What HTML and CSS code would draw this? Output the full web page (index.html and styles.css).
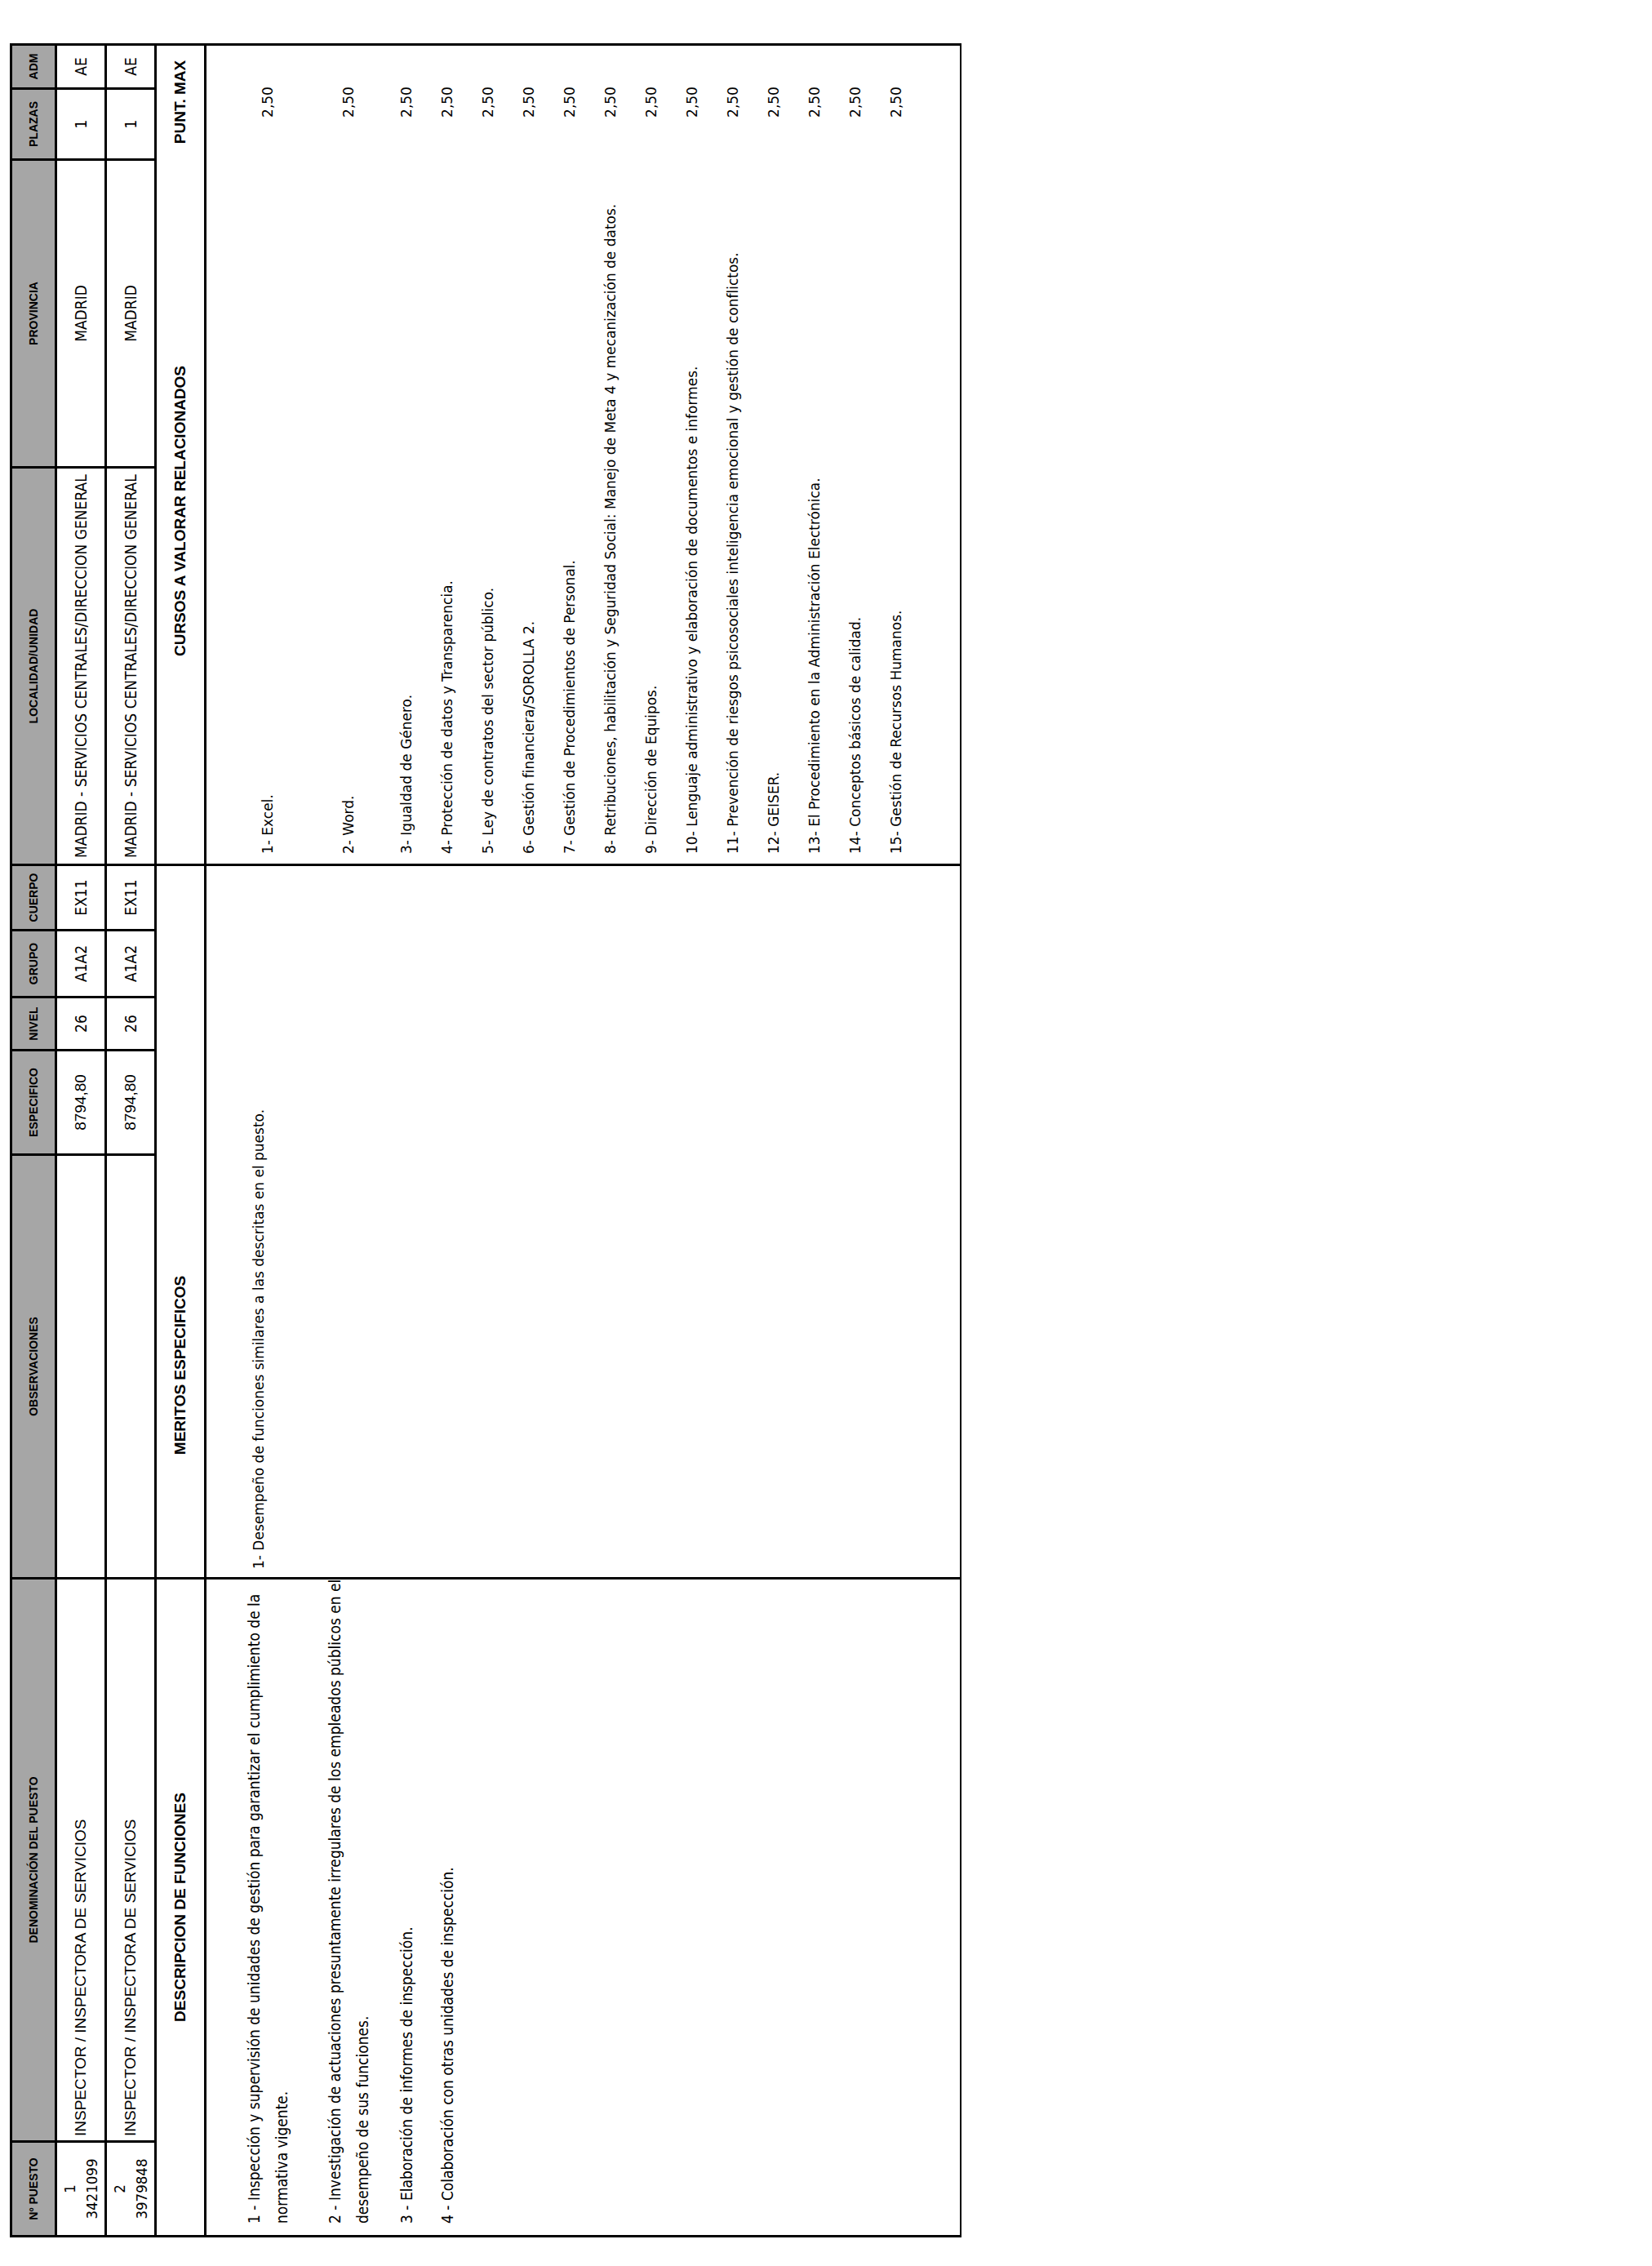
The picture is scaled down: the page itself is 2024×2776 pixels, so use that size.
FILE: index.html
```html
<!DOCTYPE html>
<html lang="es">
<head>
<meta charset="utf-8">
<title>Relación de puestos</title>
<link rel="stylesheet" href="styles.css">
</head>
<body>
<div class="page">
  <div class="sheet">
    <div class="hd">Nº PUESTO</div>
    <div class="hd">DENOMINACIÓN DEL PUESTO</div>
    <div class="hd">OBSERVACIONES</div>
    <div class="hd">ESPECIFICO</div>
    <div class="hd">NIVEL</div>
    <div class="hd">GRUPO</div>
    <div class="hd">CUERPO</div>
    <div class="hd">LOCALIDAD/UNIDAD</div>
    <div class="hd">PROVINCIA</div>
    <div class="hd">PLAZAS</div>
    <div class="hd">ADM</div>

    <div class="cell num nar"><span>1</span><span>3421099</span></div>
    <div class="cell left arial pad5">INSPECTOR / INSPECTORA DE SERVICIOS</div>
    <div class="cell"></div>
    <div class="cell arial">8794,80</div>
    <div class="cell nar">26</div>
    <div class="cell nar">A1A2</div>
    <div class="cell nar">EX11</div>
    <div class="cell left nar pad7">MADRID - SERVICIOS CENTRALES/DIRECCION GENERAL</div>
    <div class="cell nar">MADRID</div>
    <div class="cell nar">1</div>
    <div class="cell nar">AE</div>

    <div class="cell num nar"><span>2</span><span>3979848</span></div>
    <div class="cell left arial pad5">INSPECTOR / INSPECTORA DE SERVICIOS</div>
    <div class="cell"></div>
    <div class="cell arial">8794,80</div>
    <div class="cell nar">26</div>
    <div class="cell nar">A1A2</div>
    <div class="cell nar">EX11</div>
    <div class="cell left nar pad7">MADRID - SERVICIOS CENTRALES/DIRECCION GENERAL</div>
    <div class="cell nar">MADRID</div>
    <div class="cell nar">1</div>
    <div class="cell nar">AE</div>

    <div class="sec span2">DESCRIPCION DE FUNCIONES</div>
    <div class="sec open">MERITOS ESPECIFICOS</div>
    <div class="sec span4"></div>
    <div class="sec span2 open">CURSOS A VALORAR RELACIONADOS</div>
    <div class="sec span2">PUNT. MAX</div>

    <div class="body span2 funcs">
      <div class="row r1"><p>1 - Inspección y supervisión de unidades de gestión para garantizar el cumplimiento de la<br>normativa vigente.</p></div>
      <div class="row r2"><p>2 - Investigación de actuaciones presuntamente irregulares de los empleados públicos en el<br>desempeño de sus funciones.</p></div>
      <div class="row"><p>3 - Elaboración de informes de inspección.</p></div>
      <div class="row"><p>4 - Colaboración con otras unidades de inspección.</p></div>
    </div>
    <div class="body span5 meritos">
      <div class="row rm">1- Desempeño de funciones similares a las descritas en el puesto.</div>
    </div>
    <div class="body span4 cursos">
      <div class="row r1"><span class="cn">1- Excel.</span><span class="pt">2,50</span></div>
      <div class="row r2"><span class="cn">2- Word.</span><span class="pt">2,50</span></div>
      <div class="row"><span class="cn">3- Igualdad de Género.</span><span class="pt">2,50</span></div>
      <div class="row"><span class="cn">4- Protección de datos y Transparencia.</span><span class="pt">2,50</span></div>
      <div class="row"><span class="cn">5- Ley de contratos del sector público.</span><span class="pt">2,50</span></div>
      <div class="row"><span class="cn">6- Gestión financiera/SOROLLA 2.</span><span class="pt">2,50</span></div>
      <div class="row"><span class="cn">7- Gestión de Procedimientos de Personal.</span><span class="pt">2,50</span></div>
      <div class="row"><span class="cn">8- Retribuciones, habilitación y Seguridad Social: Manejo de Meta 4 y mecanización de datos.</span><span class="pt">2,50</span></div>
      <div class="row"><span class="cn">9- Dirección de Equipos.</span><span class="pt">2,50</span></div>
      <div class="row"><span class="cn">10- Lenguaje administrativo y elaboración de documentos e informes.</span><span class="pt">2,50</span></div>
      <div class="row"><span class="cn">11- Prevención de riesgos psicosociales inteligencia emocional y gestión de conflictos.</span><span class="pt">2,50</span></div>
      <div class="row"><span class="cn">12- GEISER.</span><span class="pt">2,50</span></div>
      <div class="row"><span class="cn">13- El Procedimiento en la Administración Electrónica.</span><span class="pt">2,50</span></div>
      <div class="row"><span class="cn">14- Conceptos básicos de calidad.</span><span class="pt">2,50</span></div>
      <div class="row"><span class="cn">15- Gestión de Recursos Humanos.</span><span class="pt">2,50</span></div>
    </div>
  </div>
</div>
</body>
</html>
```

FILE: styles.css
```css
html, body {
  margin: 0;
  padding: 0;
  background: #ffffff;
  overflow: hidden;
}

.page {
  width: 2024px;
  height: 2776px;
  overflow: hidden;
}

.sheet {
  width: 2688px;
  height: 1166px;
  box-sizing: border-box;
  display: grid;
  grid-template-columns: 116px 690px 519px 128px 65px 82px 80px 487px 377px 87px 54px;
  grid-template-rows: 55px 61px 61px 61px 925px;
  border-left: 3px solid #000;
  border-top: 3px solid #000;
  transform-origin: 0 0;
  transform: translate(12px, 2741px) rotate(-90deg);
  color: #000;
  font-family: "Liberation Sans", Arial, sans-serif;
}

.sheet > div {
  box-sizing: border-box;
  border-right: 3px solid #000;
  border-bottom: 3px solid #000;
  min-width: 0;
  white-space: nowrap;
}

.hd {
  background: #a6a6a6;
  font-weight: 700;
  font-size: 14px;
  display: flex;
  align-items: center;
  justify-content: center;
}

.cell {
  display: flex;
  align-items: center;
  justify-content: center;
}

.cell.left {
  justify-content: flex-start;
}

.pad5 { padding-left: 5px; }
.pad7 { padding-left: 7px; }

.arial {
  font-family: "Liberation Sans", Arial, sans-serif;
  font-size: 19px;
}

.nar {
  font-family: "Liberation Sans Narrow", "Arial Narrow", "DejaVu Sans Condensed", sans-serif;
  font-size: 19px;
}

.cell.num {
  flex-direction: column;
  line-height: 27px;
  font-size: 18.5px;
}

.sec {
  font-weight: 700;
  font-size: 19px;
  display: flex;
  align-items: center;
  justify-content: center;
}

.span2 { grid-column: span 2; }
.span4 { grid-column: span 4; }
.span5 { grid-column: span 5; }

.sheet > .open { border-right: none; }

.sheet > .body {
  border-bottom-width: 2px;
  display: flex;
  flex-direction: column;
}

.funcs {
  padding: 22px 0 0 14px;
  font-family: "Liberation Sans Narrow", "Arial Narrow", "DejaVu Sans Condensed", sans-serif;
  font-size: 19px;
  line-height: 34px;
}

.funcs p { margin: 0; }

.funcs .row,
.cursos .row {
  flex: none;
  height: 50px;
  display: flex;
  align-items: center;
}

.funcs .row.r1,
.cursos .row.r1 { height: 106px; }

.funcs .row.r2,
.cursos .row.r2 { height: 92px; }

.meritos {
  padding-left: 10px;
  font-family: "DejaVu Sans", sans-serif;
  font-size: 17px;
}

.meritos .row.rm {
  height: 128px;
  display: flex;
  align-items: center;
}

.cursos {
  padding: 22px 0 0 12px;
  font-family: "DejaVu Sans", sans-serif;
  font-size: 17px;
}

.cursos .cn {
  width: 852px;
  flex: none;
}

.cursos .pt {
  width: 138px;
  flex: none;
  text-align: center;
}
```
